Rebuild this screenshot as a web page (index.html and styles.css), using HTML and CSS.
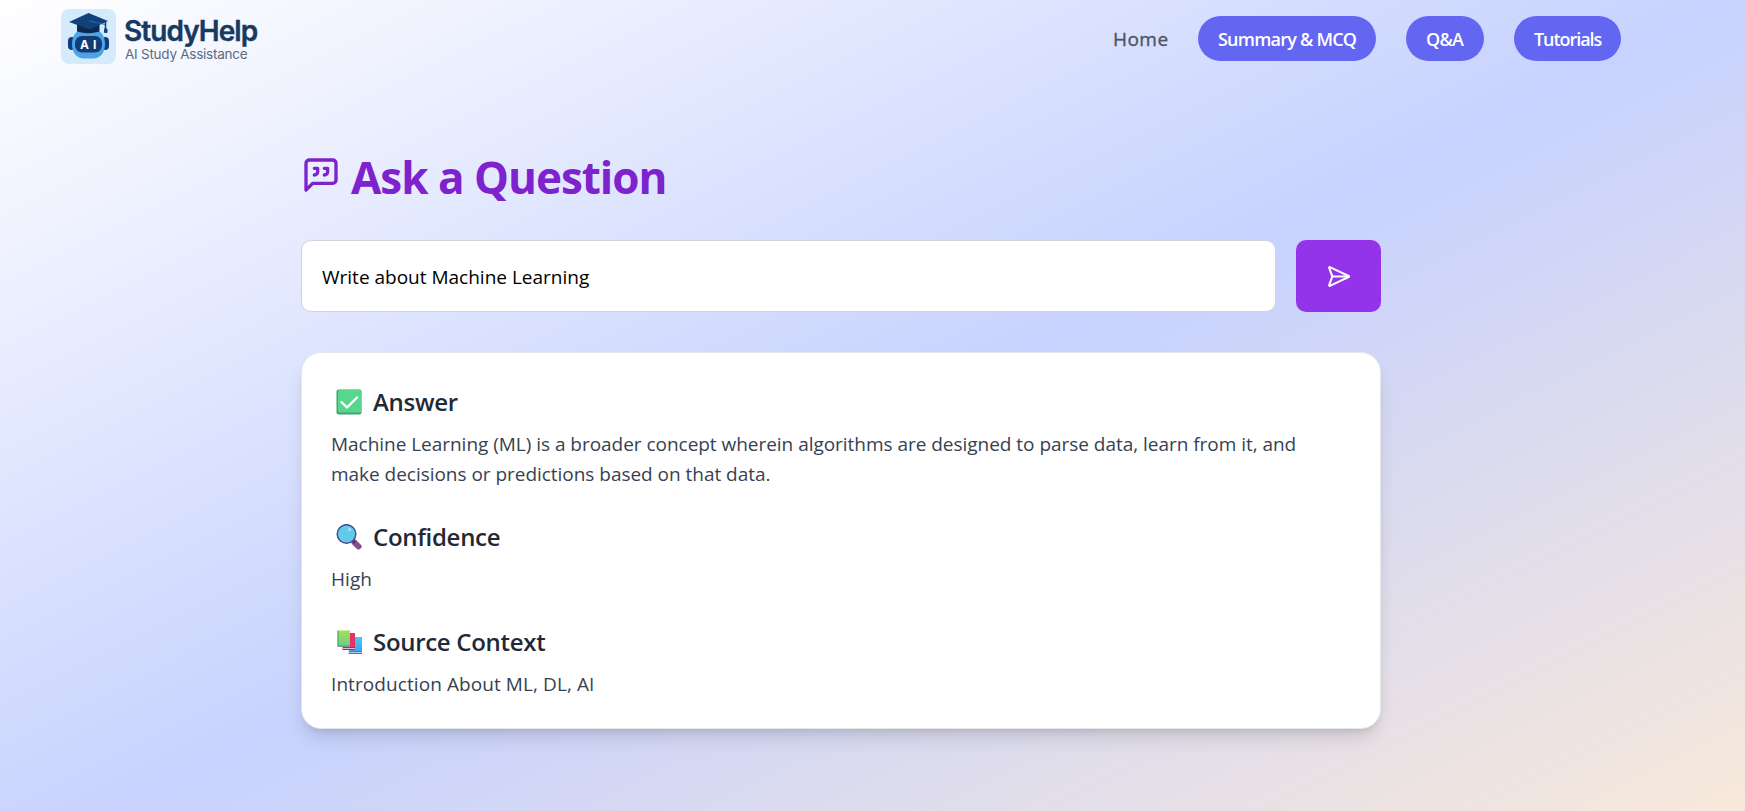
FILE: index.html
```html
<!DOCTYPE html>
<html lang="en">
<head>
<meta charset="utf-8">
<title>StudyHelp</title>
<link rel="stylesheet" href="styles.css">
</head>
<body>
<header class="navbar">
  <a class="brand">
    <svg class="brand-mark" viewBox="0 0 55 55">
      <rect width="55" height="55" rx="8" fill="#d5eafb"/>
      <rect x="7" y="28" width="8" height="13" rx="4" fill="#123c75"/>
      <rect x="40" y="28" width="8" height="13" rx="4" fill="#123c75"/>
      <path d="M19 21H36C41 23 44 28 44 35C44 44 39 49.500 32 49.500H23C16 49.500 11 44 11 35C11 28 14 23 19 21Z" fill="#4da3e8"/>
      <rect x="14" y="27" width="27" height="16.500" rx="7" fill="#123c75"/>
      <path d="M16 12H38.500V22.500Q27.500 26 16 22.500Z" fill="#0b2850"/>
      <path d="M27.500 4L47 12L29 20.500L8 13Z" fill="#12407a"/>
      <path d="M28 12L44.500 15.500" fill="none" stroke="#2767a3" stroke-width="1"/>
      <path d="M44.500 13V21" stroke="#12407a" stroke-width="1.500"/>
      <rect x="43" y="19.500" width="3.500" height="4.500" rx="1" fill="#12407a"/>
      <text class="brand-ai" x="19" y="39.500">A I</text>
    </svg>
    <span class="brand-copy">
      <span class="brand-name">StudyHelp</span>
      <span class="brand-tag">AI Study Assistance</span>
    </span>
  </a>
  <nav class="nav-links">
    <a class="nav-home">Home</a>
    <a class="pill pill-summary">Summary &amp; MCQ</a>
    <a class="pill pill-qa">Q&amp;A</a>
    <a class="pill pill-tutorials">Tutorials</a>
  </nav>
</header>
<main class="page">
  <h1 class="title">
    <svg class="title-icon" viewBox="0 0 24 24" fill="none" stroke="currentColor" stroke-width="2" stroke-linecap="round" stroke-linejoin="round">
      <path d="M21 15a2 2 0 0 1-2 2H7l-4 4V5a2 2 0 0 1 2-2h14a2 2 0 0 1 2 2z"/>
      <path d="M8 12a2 2 0 0 0 2-2V8H8"/>
      <path d="M14 12a2 2 0 0 0 2-2V8h-2"/>
    </svg>
    <span>Ask a Question</span>
  </h1>
  <form class="ask">
    <div class="ask-field"><span>Write about Machine Learning</span></div>
    <button class="ask-send" type="button" aria-label="Send">
      <svg class="send-icon" viewBox="0 0 24 24" fill="none" stroke="currentColor" stroke-width="2" stroke-linecap="round" stroke-linejoin="round">
        <path d="M3.714 3.048a.498.498 0 0 0-.683.627l2.843 7.627a2 2 0 0 1 0 1.396l-2.842 7.627a.498.498 0 0 0 .682.627l18-8.500a.5.500 0 0 0 0-.904z"/>
        <path d="M6 12h16"/>
      </svg>
    </button>
  </form>
  <section class="card">
    <div class="block">
      <h2 class="block-title">
        <svg class="emoji" viewBox="0 0 26 26">
          <rect x=".5" y=".5" width="25" height="25" rx="2" fill="#3fa672"/>
          <rect x="2" y="1" width="23.500" height="22.500" rx="1.500" fill="#59d68d"/>
          <path d="M5.500 13L11 18.500L21 8.500" fill="none" stroke="#fff" stroke-width="2.400" stroke-linecap="round" stroke-linejoin="round"/>
        </svg>
        <span>Answer</span>
      </h2>
      <p class="block-text">Machine Learning (ML) is a broader concept wherein algorithms are designed to parse data, learn from it, and<br>make decisions or predictions based on that data.</p>
    </div>
    <div class="block">
      <h2 class="block-title">
        <svg class="emoji" viewBox="0 0 26 26">
          <path d="M18.500 18.500L22.500 22.500" stroke="#85508e" stroke-width="6" stroke-linecap="round"/>
          <path d="M16.500 16.500L19 19" stroke="#533566" stroke-width="3"/>
          <circle cx="10.500" cy="10" r="9.300" fill="#62cbea" stroke="#4a4f91" stroke-width="1.500"/>
          <circle cx="13.500" cy="5.500" r="1.500" fill="#a9e6f7"/>
        </svg>
        <span>Confidence</span>
      </h2>
      <p class="block-text short">High</p>
    </div>
    <div class="block">
      <h2 class="block-title">
        <svg class="emoji" viewBox="0 0 26 26">
          <defs>
            <linearGradient id="leaf" x2="0" y2="1"><stop stop-color="#a3e052"/><stop offset="1" stop-color="#6cd08a"/></linearGradient>
            <linearGradient id="sky" x2="0" y2="1"><stop stop-color="#4bc7f0"/><stop offset="1" stop-color="#36a4f5"/></linearGradient>
          </defs>
          <rect x="13" y="8" width="13" height="16" fill="url(#sky)"/>
          <path d="M13 22H26V25H12.500Z" fill="#4b73cf"/><path d="M13 23.500H26" stroke="#b9c6f1"/>
          <rect x="7" y="4" width="12" height="16" fill="#e5306a"/>
          <path d="M6.500 18H19V21H6.500Z" fill="#b52368"/><path d="M7 19.500H19" stroke="#e9b5dc"/>
          <rect x="1.500" y="1.500" width="12.500" height="15" fill="url(#leaf)"/>
          <path d="M1.500 1.500H2.500V16H14V18H1.500Z" fill="#429c62"/><path d="M2 17H14" stroke="#aaa7cc"/>
        </svg>
        <span>Source Context</span>
      </h2>
      <p class="block-text short">Introduction About ML, DL, AI</p>
    </div>
  </section>
</main>
</body>
</html>
```
FILE: styles.css
```css
* { box-sizing: border-box; }
body {
  margin: 0;
  min-height: 811px;
  font-family: "Open Sans", "Noto Sans", sans-serif;
  background: linear-gradient(to bottom right, #ffffff, #c7d2fe 50%, #fbead7) 0 0 / 100% 874px no-repeat;
}
.navbar {
  height: 77px;
  padding: 0 124px 0 61px;
  display: flex;
  justify-content: space-between;
  align-items: center;
}
.brand { display: flex; gap: 8px; padding-bottom: 5px; }
.brand-mark { width: 55px; height: 55px; }
.brand-ai { font: 700 12px Inter, sans-serif; fill: #ffffff; letter-spacing: 0.6px; }
.brand-copy { display: flex; flex-direction: column; padding-top: 5px; font-family: Inter, sans-serif; white-space: nowrap; }
.brand-name { font-size: 28px; line-height: 34px; font-weight: 600; letter-spacing: -0.95px; color: #163a61; -webkit-text-stroke: 0.4px #163a61; }
.brand-tag { padding-left: 1px; font-size: 13.5px; line-height: 12px; color: #5a6b80; letter-spacing: -0.25px; }
.nav-links { display: flex; align-items: center; gap: 30px; white-space: nowrap; }
.nav-home { width: 55px; padding-top: 1px; font-size: 19px; font-weight: 500; letter-spacing: 0.45px; color: #4b5563; -webkit-text-stroke: 0.35px #4b5563; }
.pill {
  height: 45px;
  padding: 0 20px;
  border-radius: 23px;
  background: #6366f1;
  color: #ffffff;
  font-size: 18px;
  line-height: 47px;
  font-weight: 600;
  letter-spacing: -0.78px;
}
.pill-summary { width: 178px; }
.pill-qa { width: 78px; }
.pill-tutorials { width: 107px; letter-spacing: -1.05px; }
.page { width: 1080px; margin-left: 301px; padding-top: 73px; }
.title {
  display: flex;
  gap: 10px;
  margin: 0;
  height: 90px;
  color: #7e22ce;
  font-size: 44px;
  line-height: 55px;
  font-weight: 700;
  letter-spacing: -1px;
  white-space: nowrap;
}
.title-icon { width: 40px; height: 40px; margin-top: 5px; }
.ask { display: flex; gap: 20px; height: 72px; }
.ask-field {
  flex: 1;
  display: flex;
  align-items: center;
  padding: 2px 19px 0 20px;
  border: 1px solid #d1d5db;
  border-radius: 10px;
  background: #ffffff;
  color: #000000;
  font-size: 19px;
}
.ask-send {
  width: 85px;
  padding: 0;
  border: 0;
  border-radius: 10px;
  background: #9333ea;
  color: #ffffff;
  display: flex;
  align-items: center;
  justify-content: center;
}
.send-icon { width: 25px; height: 25px; }
.card {
  margin-top: 40px;
  height: 377px;
  padding: 31px 29px 28px;
  border: 1px solid #e5e7eb;
  border-radius: 20px;
  background: #ffffff;
  box-shadow: 0 12px 19px -4px rgba(0, 0, 0, 0.13), 0 5px 8px -5px rgba(0, 0, 0, 0.13);
  display: flex;
  flex-direction: column;
  gap: 30px;
}
.block-title {
  display: flex;
  align-items: center;
  gap: 11px;
  margin: 0 0 10px;
  padding-left: 5px;
  height: 35px;
  color: #1f2937;
  font-size: 24px;
  font-weight: 600;
  letter-spacing: -0.3px;
  white-space: nowrap;
}
.emoji { width: 26px; height: 26px; }
.block-text { margin: 0; color: #374151; font-size: 19px; line-height: 30px; letter-spacing: -0.03px; white-space: nowrap; }
.block-text.short { letter-spacing: 0.08px; }
```
